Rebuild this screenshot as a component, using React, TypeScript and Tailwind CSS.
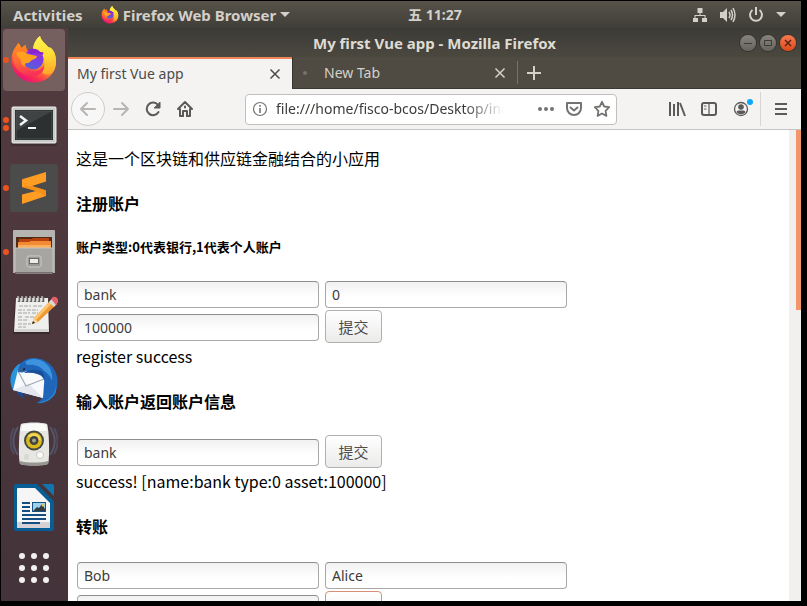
import React from "react";

const uiFont = "font-['Noto_Sans','Noto_Sans_CJK_SC',sans-serif]";

function FirefoxLogo({ id, className }: { id: string; className: string }) {
  return (
    <svg viewBox="0 0 48 48" className={className} aria-hidden="true">
      <defs>
        <linearGradient id={`${id}-body`} x1="0.8" y1="0.1" x2="0.3" y2="1">
          <stop offset="0" stopColor="#fff04a" />
          <stop offset="0.35" stopColor="#ffb52a" />
          <stop offset="0.6" stopColor="#ff7a33" />
          <stop offset="0.8" stopColor="#fb3050" />
          <stop offset="1" stopColor="#e1107e" />
        </linearGradient>
        <linearGradient id={`${id}-globe`} x1="0.8" y1="0" x2="0.3" y2="1">
          <stop offset="0" stopColor="#a02ad8" />
          <stop offset="0.5" stopColor="#7542e5" />
          <stop offset="1" stopColor="#5166d6" />
        </linearGradient>
        <linearGradient id={`${id}-flame`} x1="0.4" y1="0" x2="0.5" y2="1">
          <stop offset="0" stopColor="#fff44f" />
          <stop offset="0.5" stopColor="#ffdc36" />
          <stop offset="1" stopColor="#ffa62a" />
        </linearGradient>
        <linearGradient id={`${id}-fox`} x1="0.3" y1="0" x2="0.5" y2="1">
          <stop offset="0" stopColor="#ff8a1f" />
          <stop offset="0.5" stopColor="#ff6a35" />
          <stop offset="1" stopColor="#f7305a" />
        </linearGradient>
      </defs>
      <path
        fill={`url(#${id}-body)`}
        d="M30 0c1 5 5 7 8 11l3 1c4 4 5 8 5 14C46 38 36 46.500 24 46.500S1.500 37 1.500 25c0-6 1-10 5-15l2-3 3 5 4-3 1 5 7 1C23 9 26 3 30 0Z"
      />
      <path
        fill={`url(#${id}-flame)`}
        d="M30 0c1 5 5 7 8 11l3 1c4 4 5 9 5 14 0 5-2 9-4 11-3 2-8 2-10-1 3-4 4-11 1-16-2-3-5-5-10-6 0-6 3-11 7-14Z"
      />
      <path
        fill={`url(#${id}-fox)`}
        d="M8.500 7l3 5 4-3 2 7c-4 3-6 8-4 12 2 5 6 7 10 7 5 0 9-3 10-6 2 5-3 11-10 11C11 40 4 32 3 24c0-6 1-12 5.500-17Z"
      />
      <circle cx="23.500" cy="23.500" r="10" fill={`url(#${id}-globe)`} />
      <path fill="#8a22cf" d="M17 15c4-3 10-3 13 1 1 0 3 0 4 1-1 0-1 1-1 2-4-2-8-2-12-1Z" />
      <path
        fill="#ffa11f"
        d="M6 17c2-1 5-2 8-1l4 2 9 2c0 2-2 3-5 4-2 1-2 3-5 3-2 0-3 2-2 4-3-1-4-4-4-7-2-2-4-4-5-7Z"
      />
    </svg>
  );
}

function TerminalIcon() {
  return (
    <svg viewBox="0 0 48 48" className="size-12" aria-hidden="true">
      <rect x="1" y="8" width="46" height="38" rx="2" fill="#2c2225" opacity="0.500" />
      <rect x="2" y="7" width="44" height="36" rx="1" fill="#c9cbc9" stroke="#f2f2f0" />
      <rect x="5" y="10" width="38" height="30" fill="#1e2222" />
      <rect x="6" y="11" width="36" height="28" fill="#2c3031" stroke="#6d7373" strokeWidth="0.500" />
      <path d="M6 11h36L6 31Z" fill="#4a4e4f" opacity="0.650" />
      <path d="m10 16 6 4.500-6 4.500" fill="none" stroke="#f4f4f4" strokeWidth="2.500" />
      <path d="M18 28h8" stroke="#f4f4f4" strokeWidth="2" />
    </svg>
  );
}

function SublimeIcon() {
  return (
    <svg viewBox="0 0 48 48" className="size-12" aria-hidden="true">
      <rect width="48" height="48" rx="3" fill="#4b4b4b" />
      <path d="M12 23v-7q0-1 1-1l23-7v9.500L22 22l13 4q1 0 1 1v5l-24 8v-9.500L26 27Z" fill="#ff9c24" />
      <path d="m12 23 14 4 10-3v-1l-14-1Z" fill="#4b4b4b" opacity="0" />
      <path d="m22 22 14 4.500V32l-10-5-14-4 3-1Z" fill="#ef8a12" opacity="0.600" />
    </svg>
  );
}

function FilesIcon() {
  return (
    <svg viewBox="0 0 48 48" className="size-12" aria-hidden="true">
      <path d="M5 2h38l2 20v23H3V22Z" fill="#aaa9a6" />
      <rect x="3" y="2" width="42" height="20" rx="1" fill="#b5b4b1" />
      <rect x="6" y="9" width="36" height="12" fill="#4e2a17" />
      <path d="M9 11h13l1-1h16v10H9Z" fill="#b9410d" />
      <path d="M8 14h11l2-1h20v8H8Z" fill="#f08b33" />
      <path d="M8 17h33v4H8Z" fill="#ffae5b" />
      <rect x="5" y="20" width="38" height="25" rx="1" fill="#a6a5a2" stroke="#c6c5c2" />
      <path d="M5 44.500h38" stroke="#74716f" />
      <rect x="17" y="28" width="14" height="11" rx="2" fill="#9a9996" stroke="#cfcecb" />
      <rect x="19.500" y="30.500" width="9" height="5" fill="#ecebe8" stroke="#6c6b69" />
    </svg>
  );
}

function NotepadIcon() {
  return (
    <svg viewBox="0 0 48 48" className="size-12" aria-hidden="true">
      <path d="M5 8h34l1 34H3Z" fill="#2d2225" opacity="0.600" />
      <path d="M6 6h32l1 34H4Z" fill="#efefed" />
      <path d="M4 37h35v3H4Z" fill="#d4d4d1" />
      <path d="M9 5v5m4-5v5m4-5v5m4-5v5m4-5v5m4-5v5m4-5v5" stroke="#5f5f5d" strokeWidth="2.500" />
      <path d="M8 4v5m4-5v5m4-5v5m4-5v5m4-5v5m4-5v5m4-5v5" stroke="#f5f5f3" />
      <path d="M9 14h12m2 0h9M8 18h7m2 0h11M8 21h12m2 0h6M8 25h5m2 0h11M8 28h9M8 32h13M8 35h8" stroke="#a4a4a1" strokeDasharray="4 1" />
      <path d="m22 32 2-6L42 7l5 5-19 18Z" fill="#f09a37" />
      <path d="m24 26 18-19 2 2-18 19Z" fill="#ffc56d" />
      <path d="m22 32 2-6 4 4Z" fill="#f4d9a7" />
      <path d="m22 32 1-3 2 2Z" fill="#1d1d1d" />
      <path d="m39 10 4-4c2-1 6 3 4 5l-3 4Z" fill="#d9d9d6" />
      <path d="m41 7 2-2c3-1 6 2 5 5l-2 3Z" fill="#e4606a" />
    </svg>
  );
}

function ThunderbirdIcon() {
  return (
    <svg viewBox="0 0 48 48" className="size-12" aria-hidden="true">
      <path d="M6 34c1 4 4 7 8 8l-2-4 8 3Z" fill="#1b4a94" />
      <path d="M3 34C-2 24 1 14 9 8c7-6 20-8 28-2 9 6 12 16 10 26-2 9-9 15-21 15 3-1 5-3 6-5Z" fill="#2066ba" />
      <path d="M3 34C-2 24 1 14 9 8l5 2-6 8Z" fill="#2b95dc" />
      <path d="m8 14 27 1-2 27L3 34Z" fill="#f8f9fb" />
      <path d="m3 34 12-5 4-1 14 14Z" fill="#e4e8ee" />
      <path d="m8 15 8 15 18-7" fill="none" stroke="#a5abb6" strokeWidth="1.200" />
      <path d="M8 16C8 8 14 3 22 2c12-1 22 8 24 18-1-1-2-2-3-2 2 7 0 14-3 19 0-2 0-3-1-4-1 5-3 8-6 10 2-9 4-15 1-19-4-9-14-11-20-8-2 1-4 0-6 0Z" fill="#1f66b9" />
      <path d="M15 6c4-4 13-4 19 0 7 5 9 12 8 19-2-5-4-8-8-10-4-5-9-7-17-6Z" fill="#3d93dd" />
      <path d="M14 17c4-4 14-4 19-1l2 6c-5-4-12-6-21-5Z" fill="#174f9c" />
      <circle cx="13.500" cy="13" r="1.600" fill="#102b57" />
      <path d="M9 15c1-3 3-4 5-4l-2 5Z" fill="#3c5f92" />
      <path d="M46 26c1 11-6 19-19 21 8 1 16-4 19-11Z" fill="#2b86cf" />
    </svg>
  );
}

function RhythmboxIcon() {
  return (
    <svg viewBox="0 0 48 48" className="size-12" aria-hidden="true">
      <g fill="none" stroke="#61769c" strokeWidth="2">
        <path d="M8 7c-6 9-6 19 0 28M40 7c6 9 6 19 0 28" opacity="0.500" />
        <path d="M4 8c-5 9-5 17 0 26M44 8c5 9 5 17 0 26" opacity="0.350" />
      </g>
      <path d="M11 4c5-2 21-2 26 0 2 4 3 34 1 40-5 2-23 2-28 0-2-6-1-36 1-40Z" fill="#e6e6e2" />
      <path d="M12 5c5-2 19-2 24 0l1 6H11Z" fill="#fafaf8" />
      <path d="M10 41c7 2 21 2 28 0v3c-5 2-23 2-28 0Z" fill="#979690" />
      <circle cx="24" cy="20.500" r="10" fill="#474742" />
      <circle cx="24" cy="20.500" r="8" fill="#d9b91f" />
      <path d="M18 16c5-5 12-2 13 4l-7 1Z" fill="#f0d95b" />
      <circle cx="24" cy="20.500" r="4.500" fill="#45443c" />
      <circle cx="24" cy="20.500" r="2" fill="#a3a296" />
      <circle cx="30" cy="35" r="3.500" fill="#fbfbf9" stroke="#c9c8c2" />
      <rect x="14" y="34" width="5" height="6" rx="2" fill="#d9d8d3" />
    </svg>
  );
}

function WriterIcon() {
  return (
    <svg viewBox="0 0 48 48" className="size-12" aria-hidden="true">
      <path d="M6 0h21l17 17v28q0 2-2 2H6q-2 0-2-2V2q0-2 2-2Z" fill="#075d94" />
      <path d="M32 0h10q2 0 2 2v10Z" fill="#1275b0" />
      <path d="M8 4h17l15 15v24q0 1-1 1H8q-1 0-1-1V5q0-1 1-1Z" fill="#f6f6f6" />
      <path d="M7 38h33v6H7Z" fill="#d6d1d5" />
      <path d="M12 19h8m-8 4h8m-8 4h8m-8 4h24m-24 4h24m-24 4h18" stroke="#144f80" strokeWidth="2" />
      <rect x="22.500" y="18.500" width="13" height="9" fill="#9ed0ef" stroke="#145380" />
      <path d="m23 27 4-4 2 1 3-4 3 5v2Z" fill="#313b40" />
      <circle cx="33" cy="21" r="1.500" fill="#e2c34f" />
    </svg>
  );
}

function AppGridIcon() {
  return (
    <svg viewBox="0 0 48 48" className="size-12" fill="#f2f1f0" aria-hidden="true">
      {[12, 24, 36].map((cy) => [12, 24, 36].map((cx) => <circle key={`${cx}-${cy}`} cx={cx} cy={cy} r="3" />))}
    </svg>
  );
}

type DockItem = { name: string; icon: React.ReactNode; windows: number; active?: boolean };

const dockItems: DockItem[] = [
  { name: "Firefox Web Browser", icon: <FirefoxLogo id="dock" className="size-12" />, windows: 1, active: true },
  { name: "Terminal", icon: <TerminalIcon />, windows: 2 },
  { name: "Sublime Text", icon: <SublimeIcon />, windows: 1 },
  { name: "Files", icon: <FilesIcon />, windows: 1 },
  { name: "Text Editor", icon: <NotepadIcon />, windows: 0 },
  { name: "Thunderbird Mail", icon: <ThunderbirdIcon />, windows: 0 },
  { name: "Rhythmbox", icon: <RhythmboxIcon />, windows: 0 },
  { name: "LibreOffice Writer", icon: <WriterIcon />, windows: 0 },
];

function Dock() {
  return (
    <nav className="flex w-[67px] shrink-0 flex-col overflow-hidden bg-linear-to-b from-[#533b3f] to-[#44333a] pr-px">
      {dockItems.map((item) => (
        <div key={item.name} className="relative flex h-16 shrink-0 items-center justify-center">
          <div className="absolute left-0.5 flex flex-col gap-0.5">
            {Array.from({ length: item.windows }, (_, i) => (
              <span key={i} className="size-1.5 rounded-full bg-[#e95420]" />
            ))}
          </div>
          <button
            aria-label={item.name}
            className={`flex size-[62px] items-center justify-center rounded ${item.active ? "bg-[#75605f]" : ""}`}
          >
            {item.icon}
          </button>
        </div>
      ))}
      <div className="flex justify-center pt-1">
        <button aria-label="Show Applications">
          <AppGridIcon />
        </button>
      </div>
    </nav>
  );
}

function TopBar() {
  return (
    <header className="grid h-[27px] shrink-0 grid-cols-[6fr_auto_5fr] items-center bg-linear-to-b from-[#57534a] to-[#403e38] font-bold text-[#d3d0ca]">
      <div className="flex items-center pl-3 text-[15px]/5">
        <button>Activities</button>
        <button className="ml-[18px] flex items-center gap-1">
          <FirefoxLogo id="menu" className="size-[18px]" />
          <span>Firefox Web Browser</span>
          <svg viewBox="0 0 10 6" className="h-1.5 w-2.5" fill="currentColor" aria-hidden="true">
            <path d="M0 0h10L5 5Z" />
          </svg>
        </button>
      </div>
      <time className="text-sm">五 11:27</time>
      <div className="flex items-center justify-end gap-3 pr-[15px]">
        <svg viewBox="0 0 16 16" className="size-4" fill="currentColor" aria-hidden="true">
          <path d="M5.500 1h5v5h-2v2h5v3H15v4h-5v-4h2.500V9h-9v2H6v4H1v-4h1.500V8h5V6h-2Z" />
        </svg>
        <svg viewBox="0 0 16 16" className="size-4" aria-hidden="true">
          <path d="M0 5h3l4-4v14l-4-4H0Z" fill="currentColor" />
          <path d="M9 5q2 3 0 6m2-8q3 5 0 10m2-12q4 7 0 14" fill="none" stroke="currentColor" strokeWidth="1.500" />
        </svg>
        <svg viewBox="0 0 16 16" className="size-4" fill="none" stroke="currentColor" strokeWidth="2" aria-hidden="true">
          <path d="M8 0v8M4.500 3a6 6 0 1 0 7 0" />
        </svg>
        <svg viewBox="0 0 10 6" className="h-1.5 w-2.5" fill="currentColor" aria-hidden="true">
          <path d="M0 0h10L5 5Z" />
        </svg>
      </div>
    </header>
  );
}

const roundButton = "flex size-4 items-center justify-center rounded-full shadow-[0_0_0_1px_#34332e]";

function TitleBar() {
  return (
    <div className="grid h-[29px] shrink-0 grid-cols-[1fr_auto_1fr] items-center bg-linear-to-b from-[#3c3b37] to-[#4b483f] text-[#dfdbd2]">
      <h1 className="col-start-2 text-[15px]/5 font-bold">My first Vue app - Mozilla Firefox</h1>
      <div className="flex justify-end gap-1 pr-[5px]">
        <button aria-label="Minimize" className={`${roundButton} bg-linear-to-b from-[#85837c] to-[#66645d]`}>
          <svg viewBox="0 0 16 16" className="size-4" stroke="#3c3b37" aria-hidden="true">
            <path d="M4 8.500h8" />
          </svg>
        </button>
        <button aria-label="Maximize" className={`${roundButton} bg-linear-to-b from-[#85837c] to-[#66645d]`}>
          <svg viewBox="0 0 16 16" className="size-4" fill="none" stroke="#3c3b37" aria-hidden="true">
            <path d="M4.500 5.500h7v5h-7Z" />
          </svg>
        </button>
        <button aria-label="Close" className={`${roundButton} bg-linear-to-b from-[#f47a50] to-[#dd4814]`}>
          <svg viewBox="0 0 16 16" className="size-4" stroke="#5a2411" strokeWidth="1.500" aria-hidden="true">
            <path d="m5 5 6 6m0-6-6 6" />
          </svg>
        </button>
      </div>
    </div>
  );
}

function CloseGlyph() {
  return (
    <svg viewBox="0 0 16 16" className="size-4" stroke="currentColor" strokeWidth="1.500" aria-hidden="true">
      <path d="m3.500 3.500 9 9m0-9-9 9" />
    </svg>
  );
}

function TabStrip() {
  return (
    <div className="flex h-8 shrink-0 border-b border-[#3a3833] bg-[#4f4b43] text-sm text-[#d5d1c8]">
      <div className="-mb-px flex w-56 items-center justify-between border-t-2 border-[#f0855a] bg-[#f4f3f2] px-[9px] text-[#4b4b49]">
        <span>My first Vue app</span>
        <button aria-label="Close My first Vue app">
          <CloseGlyph />
        </button>
      </div>
      <div className="flex w-[225px] items-center border-l border-[#36342f] pr-[9px] pl-2.5">
        <span className="size-1 rounded-full bg-[#77746c]" />
        <span className="ml-[17px] flex-1">New Tab</span>
        <button aria-label="Close New Tab">
          <CloseGlyph />
        </button>
      </div>
      <button aria-label="Open a new tab" className="my-1 border-l border-[#77736a] pl-2">
        <svg viewBox="0 0 16 16" className="size-4" stroke="currentColor" strokeWidth="2" aria-hidden="true">
          <path d="M8 1v14M1 8h14" />
        </svg>
      </button>
    </div>
  );
}

const toolButton = "relative flex h-8 w-8 shrink-0 items-center justify-center";

function Glyph({ children }: { children: React.ReactNode }) {
  return (
    <svg
      viewBox="0 0 18 18"
      className="size-[18px]"
      fill="none"
      stroke="currentColor"
      strokeWidth="2"
      strokeLinecap="round"
      strokeLinejoin="round"
      aria-hidden="true"
    >
      {children}
    </svg>
  );
}

function Toolbar() {
  return (
    <div className="flex h-[41px] shrink-0 items-center border-b border-[#c4c3c1] bg-[#f4f3f2] pr-1 pl-[3px] text-[#5a5a58]">
      <button aria-label="Back" className="flex size-[34px] shrink-0 items-center justify-center rounded-full border border-[#cfcdcb] bg-[#f8f7f7] text-[#b7b6b5]">
        <Glyph>
          <path d="M16 9H2m6-6L2 9l6 6" />
        </Glyph>
      </button>
      <button aria-label="Forward" className={`${toolButton} text-[#b7b6b5]`}>
        <Glyph>
          <path d="M2 9h14m-6-6 6 6-6 6" />
        </Glyph>
      </button>
      <button aria-label="Reload" className={toolButton}>
        <Glyph>
          <path d="M14.500 12A6.300 6.300 0 1 1 14 5" />
          <path d="M16 2.500v5.500h-5.500Z" fill="currentColor" strokeWidth="1" />
        </Glyph>
      </button>
      <button aria-label="Home" className={toolButton}>
        <Glyph>
          <path d="m2 9 7-7 7 7M4 9v7h3m7-7v7h-3" />
          <path d="M7 16v-5h4v5M9 6.500v1" />
        </Glyph>
      </button>
      <div className="mx-[44px] flex h-[31px] min-w-0 flex-1 items-center rounded border border-[#c2c0be] bg-white pl-1.5 text-[#737371]">
        <svg viewBox="0 0 16 16" className="size-4 shrink-0" fill="none" stroke="currentColor" aria-hidden="true">
          <circle cx="8" cy="8" r="6.500" strokeWidth="1.200" />
          <path d="M8 7v5M8 4v1.800" strokeWidth="1.600" />
        </svg>
        <input
          aria-label="Address"
          defaultValue="file:///home/fisco-bcos/Desktop/index.html"
          className="ml-2 min-w-0 flex-1 bg-transparent text-sm text-[#3c3c3a] outline-none [mask-image:linear-gradient(to_right,black_calc(100%-40px),transparent)]"
        />
        <button aria-label="Page actions" className="ml-7 flex h-7 w-7 items-center justify-center">
          <svg viewBox="0 0 18 18" className="size-[18px]" fill="currentColor" aria-hidden="true">
            <circle cx="3" cy="9" r="2" />
            <circle cx="9" cy="9" r="2" />
            <circle cx="15" cy="9" r="2" />
          </svg>
        </button>
        <button aria-label="Save to Pocket" className="flex h-7 w-7 items-center justify-center">
          <Glyph>
            <path d="M2 3h14v5a7 7 0 0 1-14 0Z" />
            <path d="m5.500 7.500 3.500 3 3.500-3" />
          </Glyph>
        </button>
        <button aria-label="Bookmark this page" className="flex h-7 w-7 items-center justify-center">
          <Glyph>
            <path d="m9 1.800 2.200 4.700 5 .7-3.600 3.600.8 5.100L9 13.500l-4.400 2.400.8-5.100L1.800 7.200l5-.7Z" strokeWidth="1.800" />
          </Glyph>
        </button>
      </div>
      <button aria-label="Library" className={toolButton}>
        <svg viewBox="0 0 18 18" className="size-[18px]" stroke="currentColor" strokeWidth="2" aria-hidden="true">
          <path d="M2 2v14M6 4v12M10 2v14M12 3l5 13" />
        </svg>
      </button>
      <button aria-label="Sidebars" className={toolButton}>
        <Glyph>
          <rect x="2" y="3" width="14" height="12" rx="2" />
          <path d="M9 3v12M4.500 6H6m-1.500 3H6" strokeWidth="1.200" />
        </Glyph>
      </button>
      <button aria-label="Account" className={toolButton}>
        <svg viewBox="0 0 18 18" className="size-[18px]" aria-hidden="true">
          <circle cx="9" cy="9" r="6.500" fill="none" stroke="currentColor" strokeWidth="1.300" />
          <circle cx="9" cy="7" r="2.800" fill="currentColor" />
          <path d="M4.500 12c1-2 2-1.500 4.500-1.500s3.500-.500 4.500 1.500c-2 3-7 3-9 0Z" fill="currentColor" />
        </svg>
        <span className="absolute top-1.5 right-1 size-1.5 rounded-full bg-[#0aa8f5]" />
      </button>
      <div className="ml-[3px] h-[34px] w-px shrink-0 bg-[#d7d5d3]" />
      <button aria-label="Open menu" className={`${toolButton} ml-1`}>
        <svg viewBox="0 0 16 16" className="size-4" stroke="currentColor" strokeWidth="2" aria-hidden="true">
          <path d="M2 3h12M2 8h12M2 13h12" />
        </svg>
      </button>
    </div>
  );
}

function Field({ label, value = "" }: { label: string; value?: string }) {
  return (
    <input
      aria-label={label}
      defaultValue={value}
      className={`mt-0.5 h-[27px] w-[242px] rounded border border-[#a9a8a6] border-t-[#8f8e8c] bg-linear-to-b from-[#f1f1f1] to-white to-60% px-1.5 text-sm text-[#3c3c3c] outline-none ${uiFont}`}
    />
  );
}

function Submit({ focused = false }: { focused?: boolean }) {
  return (
    <button
      type="submit"
      className={`h-[33px] w-[57px] rounded border bg-linear-to-b from-white to-[#ebebea] text-[15px] text-[#4c4c4c] ${focused ? "border-[#d98f76]" : "border-[#b1b0ae]"}`}
    >
      提交
    </button>
  );
}

function FormRow({ children }: { children: React.ReactNode }) {
  return <div className="flex items-center gap-1.5 pl-px">{children}</div>;
}

const keepOnPage = (event: React.FormEvent) => event.preventDefault();

const formLayout = "mt-[22px] flex flex-col gap-0.5";
const heading = "mt-[22px] leading-6 font-bold";

function Page() {
  return (
    <div className="flex min-h-0 flex-1 bg-white">
      <main className="min-w-0 flex-1 overflow-hidden px-2 pt-[17px] font-['Noto_Sans_CJK_SC',sans-serif] text-base/[22px] text-black">
        <p>这是一个区块链和供应链金融结合的小应用</p>

        <h4 className={heading}>注册账户</h4>
        <h5 className="mt-[22px] text-[13px]/5 font-bold">账户类型:0代表银行,1代表个人账户</h5>
        <form className={formLayout} onSubmit={keepOnPage}>
          <FormRow>
            <Field label="账户" value="bank" />
            <Field label="账户类型" value="0" />
          </FormRow>
          <FormRow>
            <Field label="金额" value="100000" />
            <Submit />
          </FormRow>
          <output>register success</output>
        </form>

        <h4 className={heading}>输入账户返回账户信息</h4>
        <form className={formLayout} onSubmit={keepOnPage}>
          <FormRow>
            <Field label="账户" value="bank" />
            <Submit />
          </FormRow>
          <output>success! [name:bank type:0 asset:100000]</output>
        </form>

        <h4 className={heading}>转账</h4>
        <form className={formLayout} onSubmit={keepOnPage}>
          <FormRow>
            <Field label="转出账户" value="Bob" />
            <Field label="转入账户" value="Alice" />
          </FormRow>
          <FormRow>
            <Field label="金额" />
            <Submit focused />
          </FormRow>
        </form>
      </main>
      <div className="flex w-3 shrink-0 justify-end bg-[#f1f0ee]">
        <div className="h-[180px] w-[5px] bg-[#f2946c]" />
      </div>
    </div>
  );
}

export default function App() {
  return (
    <div className={`flex h-screen flex-col overflow-hidden bg-black pt-px pr-1.5 pb-[5px] pl-px ${uiFont}`}>
      <TopBar />
      <div className="flex min-h-0 flex-1">
        <Dock />
        <section className="flex min-w-0 flex-1 flex-col">
          <TitleBar />
          <TabStrip />
          <Toolbar />
          <Page />
        </section>
      </div>
    </div>
  );
}
